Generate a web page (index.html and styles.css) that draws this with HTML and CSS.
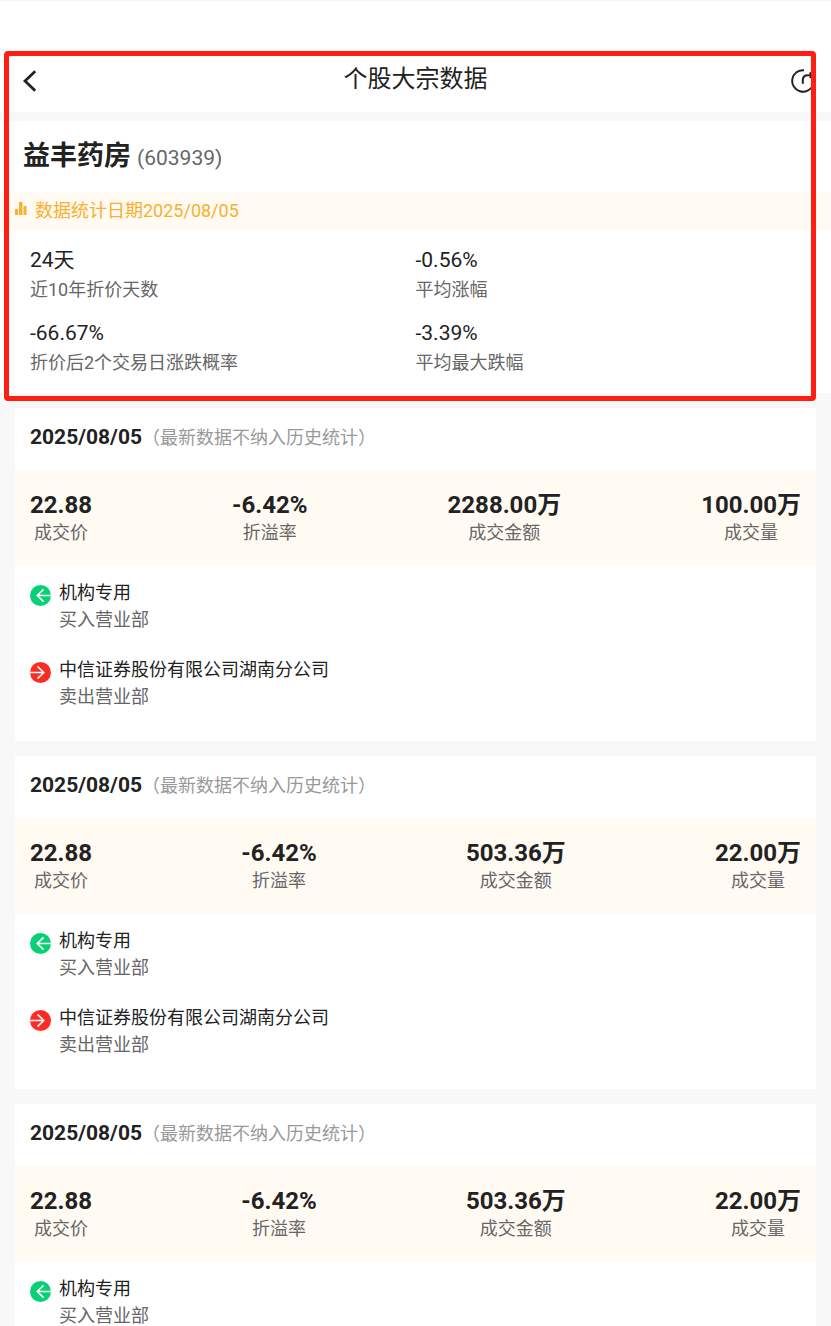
FILE: index.html
```html
<!DOCTYPE html>
<html lang="zh-CN">
<head>
    <meta charset="UTF-8">
    <meta name="viewport" content="width=device-width, initial-scale=1.0">
    <title>个股大宗数据</title>
    <link rel="stylesheet" href="styles.css">
</head>
<body>
    <div class="page">
        <div class="top">
            <header class="navbar">
                <button class="icon-btn back" type="button" aria-label="返回">
                    <svg width="14" height="22" viewBox="0 0 14 22" fill="none" stroke="#222" stroke-width="2.8"><path d="M12.2 1.2L2 11l10.2 9.8"/></svg>
                </button>
                <h1>个股大宗数据</h1>
                <button class="icon-btn share" type="button" aria-label="分享">
                    <svg width="25" height="24" viewBox="0 0 25 24" fill="none" stroke="#222" stroke-width="2"><path d="M13 1.2A10.8 10.8 0 1 0 22 16"/><path d="M11.8 14.8V11c0-3.2 2-4.8 5-4.8h4"/><path d="M18.6 3.6l3.6 2.6-3.6 2.6"/></svg>
                </button>
            </header>

            <div class="stock">
                <h2>益丰药房</h2>
                <span class="code">(603939)</span>
            </div>

            <div class="notice">
                <svg width="12" height="18" viewBox="0 0 12 18" fill="#f9b02e"><path d="M0 7h3v6H0zM4 0h3.4v13H4zM8.5 4h3v9h-3z"/></svg>
                <span>数据统计日期2025/08/05</span>
            </div>

            <div class="stats">
                <div class="stat"><b>24天</b><span>近10年折价天数</span></div>
                <div class="stat"><b>-0.56%</b><span>平均涨幅</span></div>
                <div class="stat"><b>-66.67%</b><span>折价后2个交易日涨跌概率</span></div>
                <div class="stat"><b>-3.39%</b><span>平均最大跌幅</span></div>
            </div>

            <div class="highlight"></div>
        </div>

        <main class="list">
            <section class="card">
                <div class="card-head"><h3>2025/08/05</h3><span>（最新数据不纳入历史统计）</span></div>
                <div class="metrics">
                    <div class="metric"><b>22.88</b><span>成交价</span></div>
                    <div class="metric"><b>-6.42%</b><span>折溢率</span></div>
                    <div class="metric"><b>2288.00万</b><span>成交金额</span></div>
                    <div class="metric"><b>100.00万</b><span>成交量</span></div>
                </div>
                <div class="depts">
                    <div class="dept">
                        <svg width="21" height="21" viewBox="0 0 21 21" fill="none" stroke="#fff" stroke-width="1.7"><circle cx="10.5" cy="10.5" r="10.5" fill="#07d175" stroke="none"/><path d="M21 10.5H7.5M13.5 4.3l-6.2 6.2 6.2 6.2"/></svg>
                        <div><p>机构专用</p><span>买入营业部</span></div>
                    </div>
                    <div class="dept">
                        <svg width="21" height="21" viewBox="0 0 21 21" fill="none" stroke="#fff" stroke-width="1.7"><circle cx="10.5" cy="10.5" r="10.5" fill="#ff2a24" stroke="none"/><path d="M0 10.5h13.5M7.5 4.3l6.2 6.2-6.2 6.2"/></svg>
                        <div><p>中信证券股份有限公司湖南分公司</p><span>卖出营业部</span></div>
                    </div>
                </div>
            </section>

            <section class="card">
                <div class="card-head"><h3>2025/08/05</h3><span>（最新数据不纳入历史统计）</span></div>
                <div class="metrics">
                    <div class="metric"><b>22.88</b><span>成交价</span></div>
                    <div class="metric"><b>-6.42%</b><span>折溢率</span></div>
                    <div class="metric"><b>503.36万</b><span>成交金额</span></div>
                    <div class="metric"><b>22.00万</b><span>成交量</span></div>
                </div>
                <div class="depts">
                    <div class="dept">
                        <svg width="21" height="21" viewBox="0 0 21 21" fill="none" stroke="#fff" stroke-width="1.7"><circle cx="10.5" cy="10.5" r="10.5" fill="#07d175" stroke="none"/><path d="M21 10.5H7.5M13.5 4.3l-6.2 6.2 6.2 6.2"/></svg>
                        <div><p>机构专用</p><span>买入营业部</span></div>
                    </div>
                    <div class="dept">
                        <svg width="21" height="21" viewBox="0 0 21 21" fill="none" stroke="#fff" stroke-width="1.7"><circle cx="10.5" cy="10.5" r="10.5" fill="#ff2a24" stroke="none"/><path d="M0 10.5h13.5M7.5 4.3l6.2 6.2-6.2 6.2"/></svg>
                        <div><p>中信证券股份有限公司湖南分公司</p><span>卖出营业部</span></div>
                    </div>
                </div>
            </section>

            <section class="card">
                <div class="card-head"><h3>2025/08/05</h3><span>（最新数据不纳入历史统计）</span></div>
                <div class="metrics">
                    <div class="metric"><b>22.88</b><span>成交价</span></div>
                    <div class="metric"><b>-6.42%</b><span>折溢率</span></div>
                    <div class="metric"><b>503.36万</b><span>成交金额</span></div>
                    <div class="metric"><b>22.00万</b><span>成交量</span></div>
                </div>
                <div class="depts">
                    <div class="dept">
                        <svg width="21" height="21" viewBox="0 0 21 21" fill="none" stroke="#fff" stroke-width="1.7"><circle cx="10.5" cy="10.5" r="10.5" fill="#07d175" stroke="none"/><path d="M21 10.5H7.5M13.5 4.3l-6.2 6.2 6.2 6.2"/></svg>
                        <div><p>机构专用</p><span>买入营业部</span></div>
                    </div>
                </div>
            </section>
        </main>
    </div>
</body>
</html>
```
FILE: styles.css
```css
* {
    box-sizing: border-box;
    margin: 0;
    padding: 0;
}
body {
    font-family: Roboto, 'Noto Sans CJK SC', sans-serif;
    font-size: 18px;
    line-height: 27px;
    color: #222;
    background: #f8f8f8;
}
svg {
    display: block;
    flex: none;
}
.page {
    height: 100vh;
    overflow: hidden;
}
.top {
    position: relative;
    background: #fff;
    border-top: 1px solid #f5f5f5;
}
/* 顶部导航 */
.navbar {
    display: flex;
    align-items: center;
    justify-content: space-between;
    padding: 48px 15px 0;
    height: 111px;
}
.navbar h1 {
    font-size: 24px;
    font-weight: 400;
    line-height: 32px;
    padding-bottom: 4px;
}
.icon-btn {
    display: flex;
    width: 40px;
    border: none;
    background: none;
    cursor: pointer;
}
.back {
    padding-left: 8px;
}
.share {
    justify-content: flex-end;
}
.stock {
    display: flex;
    align-items: baseline;
    gap: 6px;
    height: 80px;
    padding: 15px 23px 0;
    border-top: 9px solid #f8f8f8;
}
.stock h2 {
    font-size: 27px;
    font-weight: 700;
    line-height: 40px;
}
.code {
    font-size: 21px;
    color: #666;
}
.notice {
    display: flex;
    align-items: center;
    gap: 8px;
    height: 39px;
    padding: 0 15px 2px;
    background: #fffaf2;
    color: #f9b02e;
}
.stats {
    display: grid;
    grid-template-columns: 1fr 1fr;
    row-gap: 14px;
    padding: 14px 30px 16px;
}
.stat b {
    display: block;
    font-size: 21px;
    font-weight: 400;
    line-height: 30px;
}
.stat span {
    display: block;
    line-height: 29px;
    color: #666;
}
/* 红色标注框 */
.highlight {
    position: absolute;
    top: 50px;
    right: 15px;
    bottom: -8px;
    left: 4px;
    border: 5px solid #ff1e12;
    border-radius: 4px;
    pointer-events: none;
}
/* 交易记录 */
.list {
    display: flex;
    flex-direction: column;
    gap: 15px;
    padding: 15px;
}
.card {
    background: #fff;
}
.card-head {
    display: flex;
    align-items: center;
    height: 62px;
    padding: 0 15px 4px;
}
.card-head h3 {
    font-size: 21px;
    font-weight: 700;
}
.card-head span {
    color: #999;
}
.metrics {
    display: flex;
    justify-content: space-between;
    height: 95px;
    padding: 20px 15px 0;
    background: #fffaf2;
}
.metric {
    text-align: center;
}
.metric b {
    display: block;
    font-size: 24px;
    font-weight: 700;
    line-height: 30px;
}
.metric span {
    display: block;
    line-height: 26px;
    color: #666;
}
.depts {
    display: flex;
    flex-direction: column;
    gap: 23px;
    padding: 14px 15px 31px;
}
.dept {
    display: flex;
    gap: 8px;
}
.dept svg {
    margin-top: 6px;
}
.dept span {
    color: #666;
}
```
